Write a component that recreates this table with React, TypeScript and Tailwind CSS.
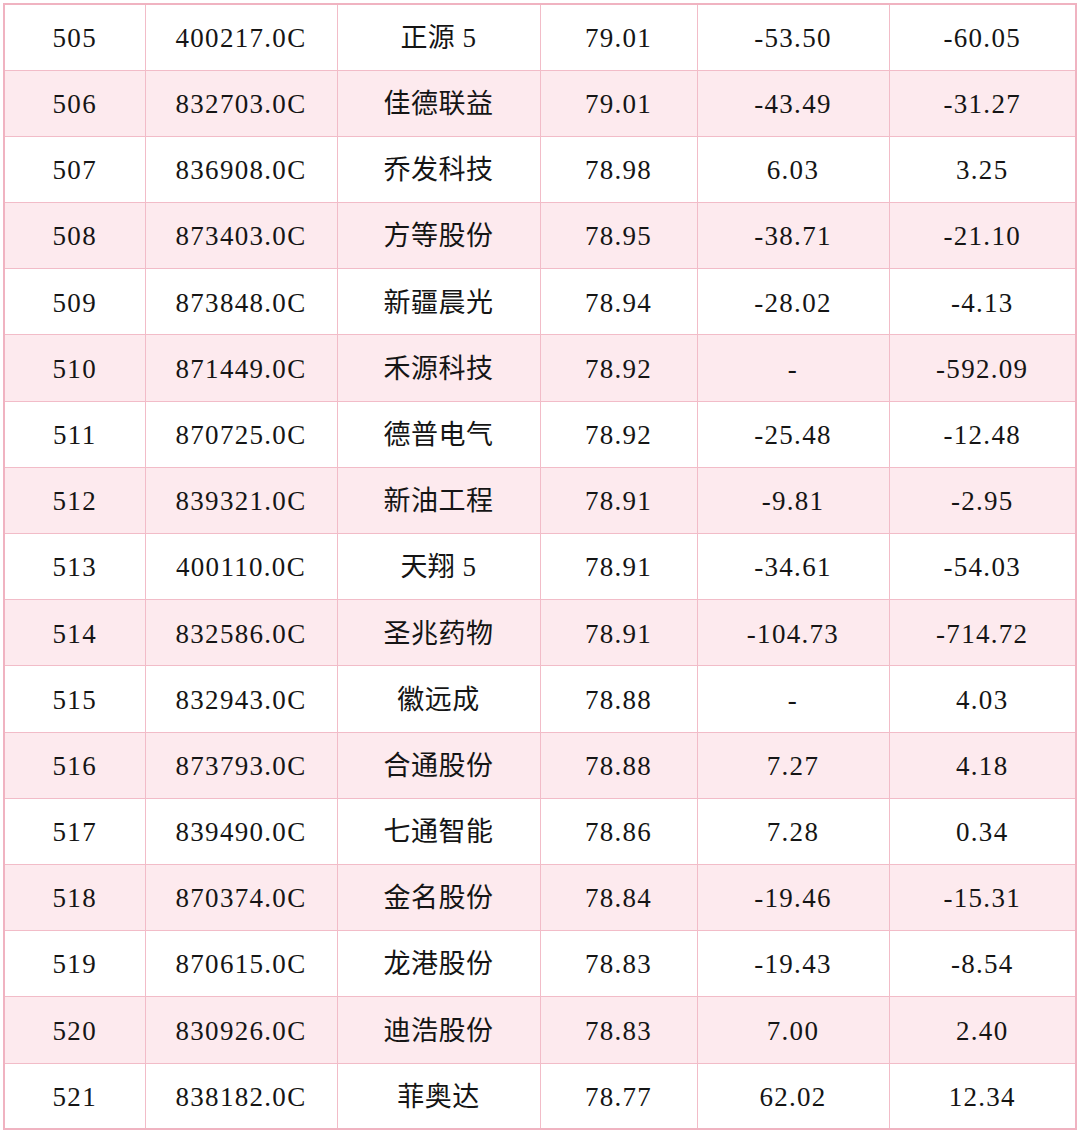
const rows: string[][] = [
  ["505", "400217.0C", "正源 5", "79.01", "-53.50", "-60.05"],
  ["506", "832703.0C", "佳德联益", "79.01", "-43.49", "-31.27"],
  ["507", "836908.0C", "乔发科技", "78.98", "6.03", "3.25"],
  ["508", "873403.0C", "方等股份", "78.95", "-38.71", "-21.10"],
  ["509", "873848.0C", "新疆晨光", "78.94", "-28.02", "-4.13"],
  ["510", "871449.0C", "禾源科技", "78.92", "-", "-592.09"],
  ["511", "870725.0C", "德普电气", "78.92", "-25.48", "-12.48"],
  ["512", "839321.0C", "新油工程", "78.91", "-9.81", "-2.95"],
  ["513", "400110.0C", "天翔 5", "78.91", "-34.61", "-54.03"],
  ["514", "832586.0C", "圣兆药物", "78.91", "-104.73", "-714.72"],
  ["515", "832943.0C", "徽远成", "78.88", "-", "4.03"],
  ["516", "873793.0C", "合通股份", "78.88", "7.27", "4.18"],
  ["517", "839490.0C", "七通智能", "78.86", "7.28", "0.34"],
  ["518", "870374.0C", "金名股份", "78.84", "-19.46", "-15.31"],
  ["519", "870615.0C", "龙港股份", "78.83", "-19.43", "-8.54"],
  ["520", "830926.0C", "迪浩股份", "78.83", "7.00", "2.40"],
  ["521", "838182.0C", "菲奥达", "78.77", "62.02", "12.34"],
];

const widths = ["w-[141px]", "w-[192px]", "w-[203px]", "w-[157px]", "w-[192px]", "w-[187px]"];

export default function App() {
  return (
    <div className="w-[1080px] h-[1132px] bg-white pt-[3px] pl-[3px]">
      <table
        className="border-collapse border-2 border-[#f0b3c1] text-[27px] text-[#151515]"
        style={{ fontFamily: '"Liberation Serif", "Noto Sans CJK SC", serif' }}
      >
        <tbody>
          {rows.map((r, i) => (
            <tr key={r[0]} className={i % 2 === 1 ? "bg-[#fdeaee]" : "bg-white"}>
              {r.map((c, j) => (
                <td
                  key={j}
                  className={`${widths[j]} h-[66.2px] p-0 pt-[2px] text-center align-middle border border-[#f2bcc8] ${
                    j === 2 ? "tracking-[0.5px]" : "tracking-[1.3px]"
                  }`}
                >
                  {c}
                </td>
              ))}
            </tr>
          ))}
        </tbody>
      </table>
    </div>
  );
}
